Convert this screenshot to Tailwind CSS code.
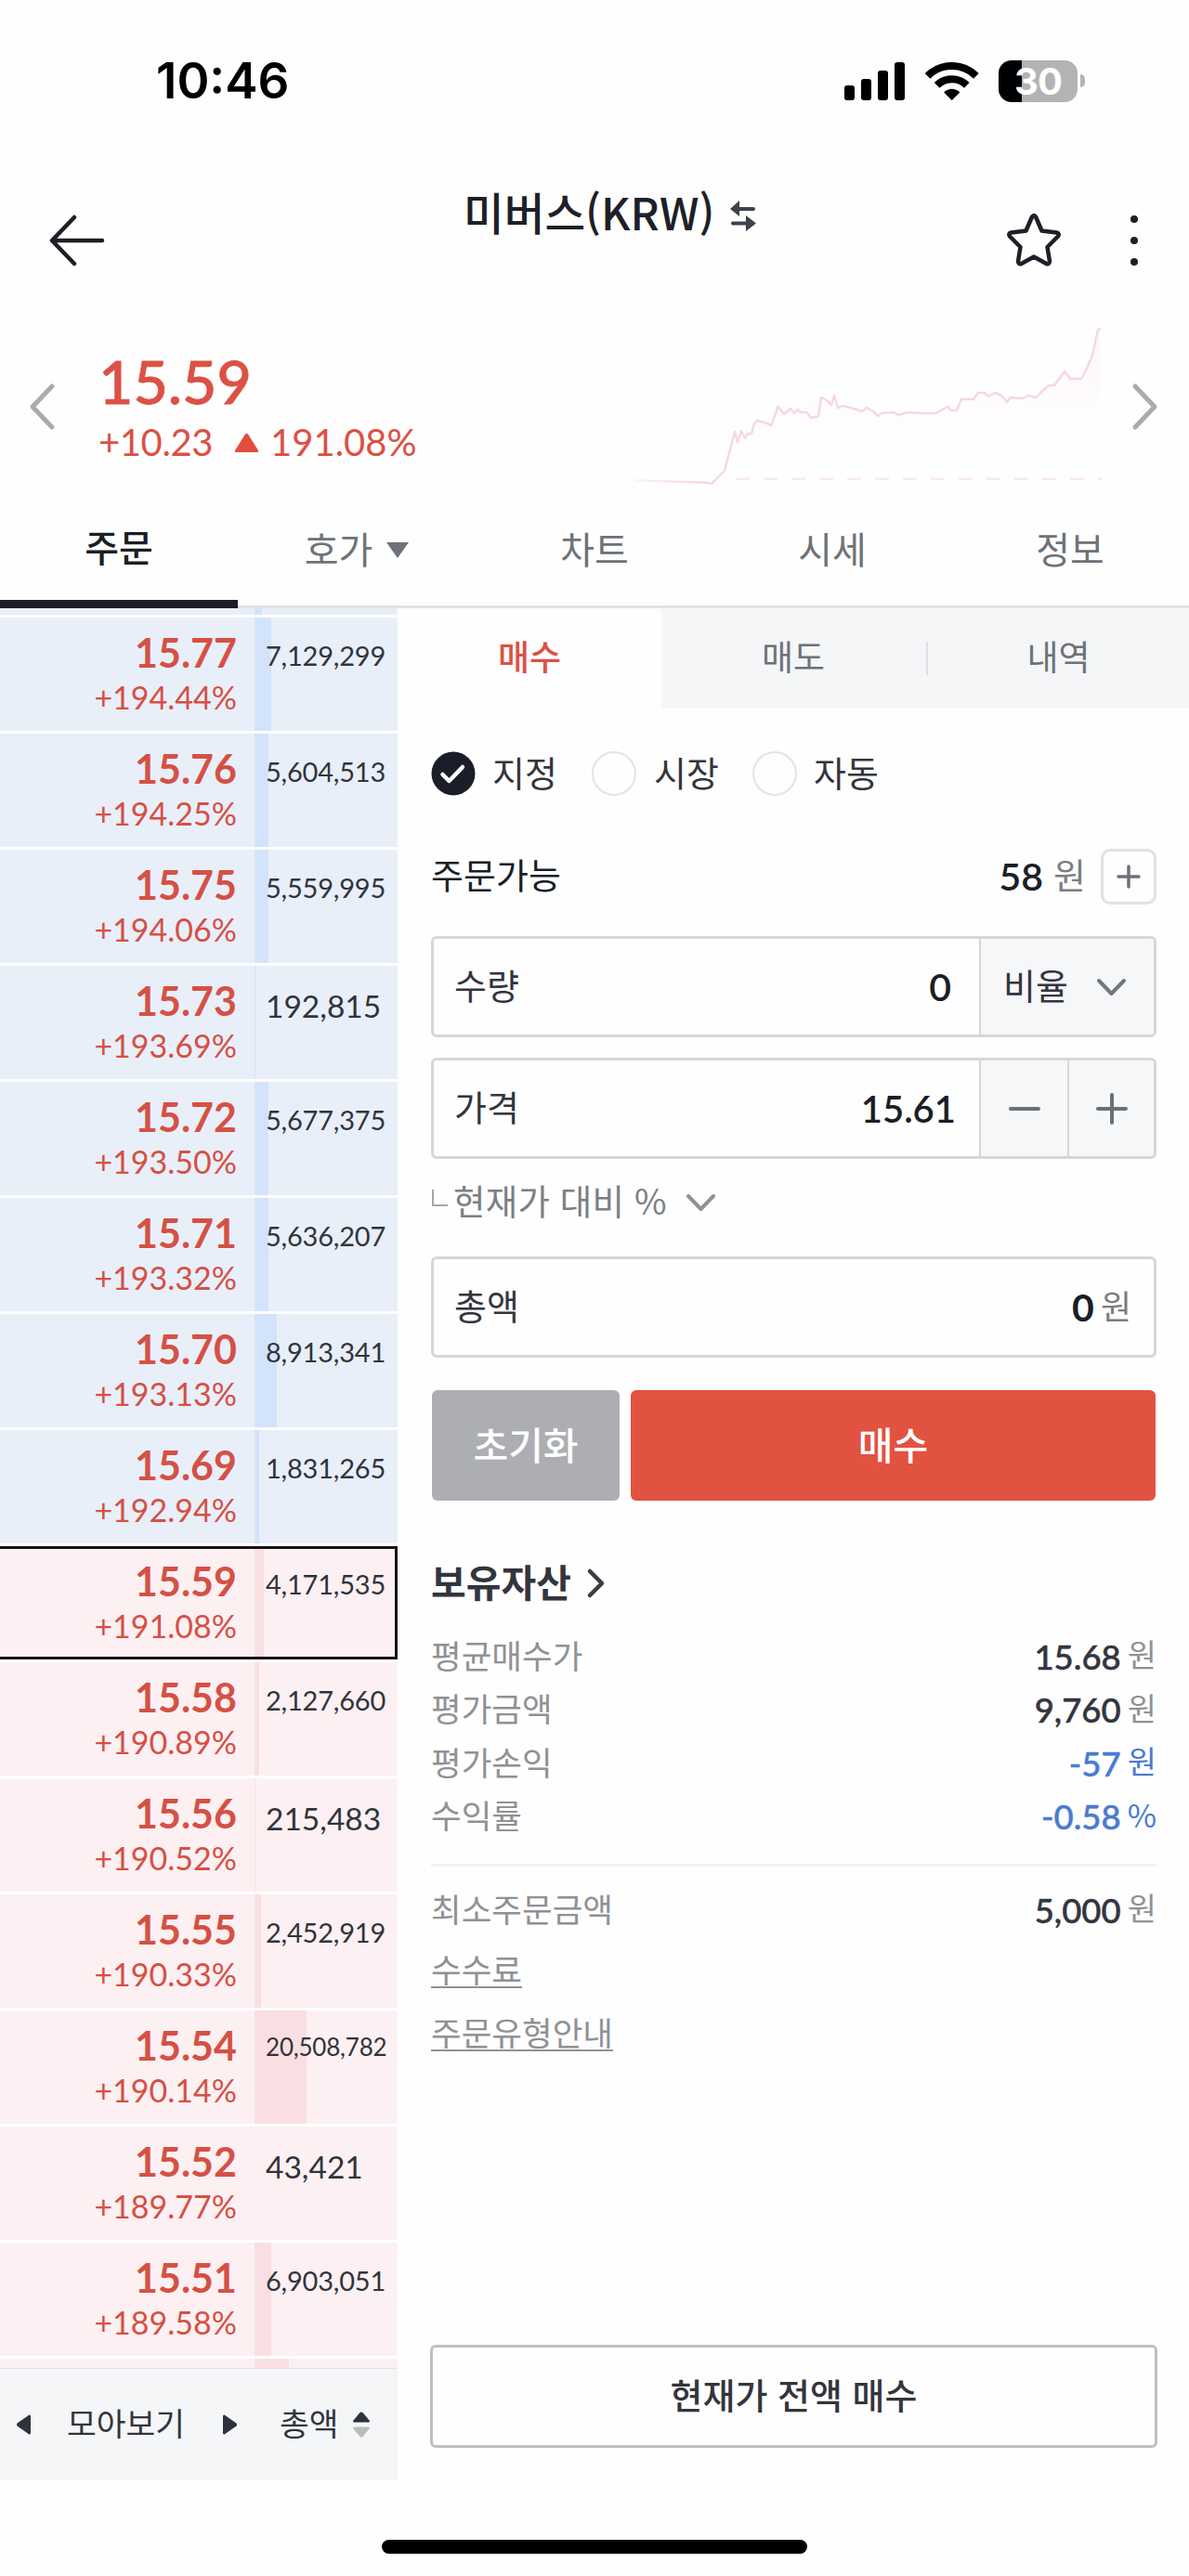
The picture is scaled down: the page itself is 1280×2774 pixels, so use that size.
<!DOCTYPE html>
<html lang="ko">
<head>
  <meta charset="UTF-8" />
  <meta name="viewport" content="width=device-width, initial-scale=1.0" />
  <title>미버스(KRW)</title>
  <script src="https://cdn.jsdelivr.net/npm/@tailwindcss/browser@4"></script>
</head>
<body class="bg-[#fefefe] w-[1280px] h-[2774px] overflow-hidden flex flex-col text-[#33353d] leading-none whitespace-nowrap font-['Noto_Sans_CJK_KR',sans-serif]">

  <!-- Status bar -->
  <div class="h-[174px] shrink-0 flex items-center pl-[168px] pr-[112px] text-black font-['Inter',sans-serif]">
    <span class="text-[53px] font-semibold">10:46</span>
    <svg class="ml-auto" width="65" height="41" viewBox="0 0 65 41">
      <rect x="0" y="25" width="11" height="16" rx="3" />
      <rect x="18" y="18" width="11" height="23" rx="3" />
      <rect x="36" y="9" width="11" height="32" rx="3" />
      <rect x="54" y="0" width="11" height="41" rx="3" />
    </svg>
    <svg class="ml-[22px]" width="58" height="41" viewBox="0 0 58 41" fill="none" stroke="black">
      <path d="M2.6 14.8a37 37 0 0 1 52.3 0" stroke-width="8" />
      <path d="M12.7 24.9a22.7 22.7 0 0 1 32.1 0" stroke-width="8" />
      <path d="M20.2 32.4a12.1 12.1 0 0 1 17.1 0L28.75 41z" fill="black" stroke="none" />
    </svg>
    <div class="ml-[21px] w-[85px] h-[45px] rounded-[14px] flex items-center justify-center bg-linear-to-r from-black from-30% to-[#b3b3b3] to-30%">
      <span class="text-[40px] leading-[45px] font-bold text-white tracking-[-1px]">30</span>
    </div>
    <div class="ml-[3px] w-[5px] h-[14px] rounded-r-full bg-[#b3b3b3]"></div>
  </div>

  <!-- Title bar -->
  <header class="h-[146px] shrink-0 flex items-start text-[#1d2027]">
    <svg class="ml-[52px] mt-[56px]" width="62" height="58" viewBox="0 0 62 58" fill="none" stroke="currentColor" stroke-width="4.5" stroke-linecap="round" stroke-linejoin="round">
      <path d="M28 4L4 29l24 25M4 29h54" />
    </svg>
    <h1 class="ml-[385px] mt-[28px] text-[47.5px] leading-[52px] font-medium">미버스(KRW)</h1>
    <svg class="ml-[17px] mt-[42px] text-[#3d424c]" width="28" height="33" viewBox="0 0 28 33" fill="currentColor">
      <path d="M0 9L10 0v7h15q2 0 2 2t-2 2H10v6z" />
      <path d="M28 24.5L17 33v-6.500H3q-2 0-2-2t2-2h14V16z" />
    </svg>
    <svg class="ml-auto mt-[54px]" width="62" height="60" viewBox="0 0 62 60" fill="none" stroke="currentColor" stroke-width="4.500" stroke-linejoin="round">
      <path d="M29 5.500Q31 2.500 33 5.500L39.500 20.500L55.500 22.500Q59 23.500 57 26.500L45.500 38L48 53.500Q47.500 57 44.500 56L31 48.500L17.500 56Q14.500 57 14 53.500L16.500 38L5 26.500Q3 23.500 6.500 22.500L22.500 20.500z" />
    </svg>
    <svg class="ml-[72px] mr-[54px] mt-[57px]" width="10" height="56" viewBox="0 0 10 56" fill="currentColor">
      <circle cx="5" cy="5" r="4" /><circle cx="5" cy="28" r="4" /><circle cx="5" cy="51" r="4" />
    </svg>
  </header>

  <!-- Price and mini chart -->
  <section class="h-[210px] shrink-0 flex items-start text-[#db5145] font-['Lato',sans-serif]">
    <svg class="ml-[30px] mt-[92px] text-[#aaabad]" width="30" height="52" viewBox="0 0 30 52" fill="none" stroke="currentColor" stroke-width="5" stroke-linecap="round" stroke-linejoin="round">
      <path d="M26 4L5 26l21 22" />
    </svg>
    <div class="ml-[46px] w-[562px] pt-[56px]">
      <div class="text-[64.5px] leading-[68px] font-medium [-webkit-text-stroke:0.8px_currentColor]">15.59</div>
      <div class="mt-[8px] flex items-center text-[40px] leading-[48px]">
        <span class="tracking-[-0.4px]">+10.23</span>
        <svg class="ml-[23px] mt-[2px]" width="27" height="22" viewBox="0 0 27 22" fill="#e24e3f"><path d="M12 1.500Q13.500 0 15 1.500L26 19Q26.500 21 25 21H2Q.5 21 1 19z" /></svg>
        <span class="ml-[12px]">191.08%</span>
      </div>
    </div>
    <svg class="ml-[12px] mt-[20px]" width="510" height="190" viewBox="680 340 510 190" fill="none">
      <defs>
        <linearGradient id="area" x1="0" y1="0" x2="0" y2="1">
          <stop offset="0" stop-color="#fdf5f7" />
          <stop offset="0.5" stop-color="#fefcfd" />
          <stop offset="1" stop-color="#fefefe" />
        </linearGradient>
        <linearGradient id="line" gradientUnits="userSpaceOnUse" x1="683" y1="0" x2="760" y2="0">
          <stop offset="0" stop-color="#fdf4f5" />
          <stop offset="1" stop-color="#f5d9dd" />
        </linearGradient>
      </defs>
      <path fill="url(#area)" d="M780 507L791 465L815 453L837 438L884 428L902 439L945 448L1007 445L1035 430L1053 423L1115 428L1146 400L1164 408L1176 382L1184 354V515H780z" />
      <path stroke="#f9e8eb" stroke-width="2.500" stroke-dasharray="15 15" d="M792 515.700H1186" />
      <path stroke="url(#line)" stroke-width="2.500" stroke-linejoin="round" d="M683 517L705 518L738 519L760 519.700L766 521L780 507L791 465L794 476L798 464L802 472L805 467L809 467L812 456L815.500 453L826 456L830.600 458L837.500 438L844 446L851 440L855 445L859 441L862 444L868.500 444L873 450L881 448L884 428L890 431L895 436L898 426L902 439L907 437L922 441L928 443L933 439L940 443L945 448L949 445L962 444L967 447L977 444L993 445L1007 445L1020 438L1024 442L1030 442L1035 430L1048 430L1053 423L1060 423L1064 427L1071 423L1078 426L1084 433L1088 428L1101 429L1107 426L1115.500 428L1122 421L1129 415L1135 415L1146 400L1152 408L1164 408L1170 397L1176 382L1182 355L1185 354" />
    </svg>
    <svg class="ml-[28px] mt-[92px] text-[#aaabad]" width="30" height="52" viewBox="0 0 30 52" fill="none" stroke="currentColor" stroke-width="5" stroke-linecap="round" stroke-linejoin="round">
      <path d="M4 4l21 22L4 48" />
    </svg>
  </section>

  <!-- Main tabs -->
  <nav class="h-[125px] shrink-0 grid grid-cols-5 text-[40px] text-[#6d7278] border-b-3 border-[#e1e2e4]">
    <div class="h-[125px] flex items-center justify-center border-b-9 border-[#1b1e26] text-[#1b1e26] font-medium">주문</div>
    <div class="flex items-center justify-center pb-[5px] gap-[15px]">호가
      <svg class="mt-[5px]" width="24" height="17" viewBox="0 0 24 17" fill="currentColor"><path d="M0 0h24L12 17z" /></svg>
    </div>
    <div class="flex items-center justify-center pb-[5px]">차트</div>
    <div class="flex items-center justify-center pb-[5px]">시세</div>
    <div class="flex items-center justify-center pb-[5px]">정보</div>
  </nav>

  <div class="h-[2016px] shrink-0 flex">

    <!-- Order book -->
    <aside class="w-[428px] flex flex-col">
      <div class="h-[7px] pl-[274px] bg-[#e9eff9]"><div class="w-[8px] h-full bg-[#d3e3fb]"></div></div>
      <div id="book" class="flex flex-col gap-[3px] py-[3px] font-['Lato',sans-serif]"></div>
      <div class="h-[10px] pl-[274px] bg-[#fdf0f2]"><div class="w-[37px] h-full bg-[#fadfe2]"></div></div>
      <div class="h-[121px] flex items-center pl-[18px] bg-[#f4f6f8] border-t border-[#e3dfe8] text-[34.500px]">
        <svg width="15" height="22" viewBox="0 0 15 22" fill="#2d323c"><path d="M15 1.500v19q-1 2-3 0L.5 12.500q-1-1.500 0-3L12 1.500q2-2 3 0z" /></svg>
        <span class="ml-[39px] pb-[5px]">모아보기</span>
        <svg class="ml-[41px]" width="15" height="22" viewBox="0 0 15 22" fill="#2d323c"><path d="M0 1.500v19q1 2 3 0l11.500-8q1-1.500 0-3L3 1.500q-2-2-3 0z" /></svg>
        <span class="ml-[46px] pb-[5px]">총액</span>
        <svg class="ml-[16px]" width="18" height="28" viewBox="0 0 18 28"><path d="M7.500 1Q9 0 10.500 1L18 10q0 1.500-1.500 1.500h-15Q0 11.500 0 10z" fill="#2d323c" /><path d="M7.500 27Q9 28 10.500 27L18 18q0-1.500-1.500-1.500h-15Q0 16.500 0 18z" fill="#babbbd" /></svg>
      </div>
    </aside>

    <!-- Order form -->
    <main class="w-[852px] flex flex-col">
      <div class="h-[107px] grid grid-cols-3 text-[37px] text-[#6d7278] bg-[#f4f6f8]">
        <div class="flex items-center justify-center pb-[5px] bg-[#fefefe] text-[#dc5145] font-medium">매수</div>
        <div class="flex items-center justify-center pb-[5px]">매도</div>
        <div class="flex items-center"><div class="w-[2px] h-[36px] ml-[1px] bg-[#dddfe2]"></div><span class="flex-1 text-center pb-[5px]">내역</span></div>
      </div>

      <div class="pl-[36px] pr-[35px] flex flex-col">
        <div class="mt-[47px] h-[48px] flex items-center text-[38px]">
          <svg width="48" height="48" viewBox="0 0 48 48" fill="none"><circle cx="24" cy="24" r="23.500" fill="#1b1e29" /><path d="M12.500 25l7 7L34 17" stroke="white" stroke-width="4.500" stroke-linecap="round" stroke-linejoin="round" /></svg>
          <span class="ml-[18px] w-[107px] pb-[5px]">지정</span>
          <div class="w-[48px] h-[48px] rounded-full border-2 border-[#e2e3e5]"></div>
          <span class="ml-[19px] w-[106px] pb-[5px]">시장</span>
          <div class="w-[48px] h-[48px] rounded-full border-2 border-[#e2e3e5]"></div>
          <span class="ml-[18px] pb-[5px]">자동</span>
        </div>

        <div class="mt-[57px] h-[59px] flex items-center text-[38px]">
          <span class="pb-[5px] text-[#1b1e26]">주문가능</span>
          <span class="ml-auto text-[41px] text-[#1b1e26] font-semibold font-['Lato',sans-serif]">58</span>
          <span class="ml-[11px] pb-[5px] text-[#7b7d82]">원</span>
          <div class="ml-[16px] w-[60px] h-[60px] rounded-[10px] border-3 border-[#e0e1e3] flex items-center justify-center">
            <svg width="26" height="26" viewBox="0 0 26 26" stroke="#6e7178" stroke-width="3.500" stroke-linecap="round"><path d="M13 2v22M2 13h22" /></svg>
          </div>
        </div>

        <div class="mt-[35px] h-[109px] flex rounded-[6px] border-3 border-[#d6d7d9] overflow-hidden text-[38px]">
          <div class="flex-1 flex items-center justify-between pl-[22px] pr-[30px]">
            <span class="pb-[5px]">수량</span>
            <span class="text-[41px] text-[#1b1e26] font-semibold font-['Lato',sans-serif]">0</span>
          </div>
          <div class="w-[188px] flex items-center pl-[24px] border-l-2 border-[#d6d7d9] bg-[#f6f7f9]">
            <span class="pb-[5px]">비율</span>
            <svg class="ml-[30px]" width="33" height="20" viewBox="0 0 33 20" fill="none" stroke="#73777d" stroke-width="4" stroke-linecap="round" stroke-linejoin="round"><path d="M3 3l13.500 14L30 3" /></svg>
          </div>
        </div>

        <div class="mt-[22px] h-[109px] flex rounded-[6px] border-3 border-[#d6d7d9] overflow-hidden text-[38px]">
          <div class="flex-1 flex items-center justify-between pl-[22px] pr-[25px]">
            <span class="pb-[5px]">가격</span>
            <span class="text-[40px] text-[#1b1e26] font-semibold font-['Lato',sans-serif]">15.61</span>
          </div>
          <div class="w-[95px] flex items-center justify-center border-l-2 border-[#d6d7d9] bg-[#f6f7f9]">
            <svg width="34" height="34" viewBox="0 0 34 34" stroke="#6b6f76" stroke-width="4" stroke-linecap="round"><path d="M2 17h30" /></svg>
          </div>
          <div class="w-[93px] flex items-center justify-center border-l-2 border-[#d6d7d9] bg-[#f6f7f9]">
            <svg width="34" height="34" viewBox="0 0 34 34" stroke="#6b6f76" stroke-width="4" stroke-linecap="round"><path d="M17 2v30M2 17h30" /></svg>
          </div>
        </div>

        <div class="mt-[22px] h-[49px] flex items-center text-[37.500px] text-[#7b7f84]">
          <div class="ml-[1px] mb-[9px] w-[17px] h-[18px] border-l-2 border-b-2 border-[#a5a7aa]"></div>
          <span class="ml-[6px] pb-[5px] tracking-[0.2px]">현재가 대비 %</span>
          <svg class="ml-[20px]" width="33" height="20" viewBox="0 0 33 20" fill="none" stroke="#8e9195" stroke-width="4" stroke-linecap="round" stroke-linejoin="round"><path d="M3 3l13.500 14L30 3" /></svg>
        </div>

        <div class="mt-[34px] h-[109px] flex items-center pl-[22px] pr-[24px] rounded-[6px] border-3 border-[#d6d7d9] text-[38px]">
          <span class="pb-[5px]">총액</span>
          <span class="ml-auto text-[41px] text-[#1b1e26] font-bold font-['Lato',sans-serif]">0</span>
          <span class="ml-[7px] pb-[5px] text-[36px] text-[#7b7d82]">원</span>
        </div>

        <div class="mt-[35px] h-[119px] flex gap-[12px] pl-[1px] pr-[1px] text-[41px] text-white font-medium">
          <div class="w-[202px] flex items-center justify-center pb-[5px] rounded-[6px] bg-[#adaeb4]">초기화</div>
          <div class="flex-1 flex items-center justify-center pb-[5px] rounded-[6px] bg-[#e25241]">매수</div>
        </div>

        <div class="mt-[64px] h-[50px] flex items-center text-[41px] font-bold">
          <span class="pb-[5px]">보유자산</span>
          <svg class="ml-[16px]" width="22" height="34" viewBox="0 0 22 34" fill="none" stroke="#3b3d46" stroke-width="4.500" stroke-linecap="round" stroke-linejoin="round"><path d="M4 4l13 13L4 30" /></svg>
        </div>

        <div id="assets" class="mt-[25px] text-[35.500px] text-[#909195]"></div>

        <div class="mt-[22px] h-[3px] bg-[#f1f2f3]"></div>

        <div id="limits" class="mt-[18px] text-[35.500px] text-[#909195]"></div>
        <div class="mt-[16px] text-[35.500px] text-[#909195] flex flex-col items-start gap-[29px]">
          <a class="h-[39px] border-b-2 border-[#909195]">수수료</a>
          <a class="h-[39px] border-b-2 border-[#909195]">주문유형안내</a>
        </div>

      </div>

      <div class="mt-auto mb-[35px] ml-[35px] mr-[34px] h-[111px] flex items-center justify-center pb-[5px] rounded-[6px] border-3 border-[#bfbfc1] text-[38px] font-medium">현재가 전액 매수</div>
    </main>
  </div>

  <!-- Home indicator -->
  <div class="mt-[64px] mx-auto w-[458px] h-[15px] shrink-0 rounded-full bg-black"></div>

  <script>
    // price, change, volume, depth bar width in px
    const asks = [
      ['15.77', '+194.44%', '7,129,299', 18],
      ['15.76', '+194.25%', '5,604,513', 15],
      ['15.75', '+194.06%', '5,559,995', 15],
      ['15.73', '+193.69%', '192,815', 1],
      ['15.72', '+193.50%', '5,677,375', 15],
      ['15.71', '+193.32%', '5,636,207', 15],
      ['15.70', '+193.13%', '8,913,341', 24],
      ['15.69', '+192.94%', '1,831,265', 5],
    ];
    const bids = [
      ['15.59', '+191.08%', '4,171,535', 10],
      ['15.58', '+190.89%', '2,127,660', 5],
      ['15.56', '+190.52%', '215,483', 1],
      ['15.55', '+190.33%', '2,452,919', 7],
      ['15.54', '+190.14%', '20,508,782', 56],
      ['15.52', '+189.77%', '43,421', 0],
      ['15.51', '+189.58%', '6,903,051', 18],
    ];

    // long volumes shrink to fit the column
    function volumeSize(volume) {
      if (volume.length > 9) return 'text-[26px] leading-[78px] tracking-[-0.2px]';
      if (volume.length > 7) return 'text-[29px] leading-[82px] tracking-[-0.2px]';
      return 'text-[33.5px] leading-[86px]';
    }

    function renderRow([price, change, volume, bar], rowColor, barColor, current) {
      return `
        <div class="relative h-[122px] flex ${rowColor}">
          <div class="w-[274px] pr-[19px] pt-[15px] text-right text-[#d55045]">
            <div class="text-[43px] leading-[46px] font-bold">${price}</div>
            <div class="text-[34px] leading-[49px]">${change}</div>
          </div>
          <div class="relative flex-1 pl-[12px] text-[#30343c]">
            <div class="absolute left-0 top-0 h-full ${barColor}" style="width:${bar}px"></div>
            <div class="relative ${volumeSize(volume)}">${volume}</div>
          </div>
          ${current ? '<div class="absolute inset-0 border-3 border-l-0 border-[#121316]"></div>' : ''}
        </div>`;
    }

    document.getElementById('book').innerHTML =
      asks.map(row => renderRow(row, 'bg-[#e9eff9]', 'bg-[#d3e3fb]', false)).join('') +
      bids.map((row, i) => renderRow(row, 'bg-[#fdf0f2]', 'bg-[#fadfe2]', i === 0)).join('');

    function renderInfo([label, value, unit, valueColor, unitColor]) {
      return `
        <div class="h-[57.5px] flex items-center">
          <span class="pb-[5px]">${label}</span>
          <span class="ml-auto text-[36.5px] font-medium [-webkit-text-stroke:0.5px_currentColor] font-['Lato',sans-serif] ${valueColor}">${value}</span>
          <span class="ml-[7px] pb-[5px] text-[34px] ${unitColor}">${unit}</span>
        </div>`;
    }

    document.getElementById('assets').innerHTML = [
      ['평균매수가', '15.68', '원', 'text-[#33353d]', 'text-[#909195]'],
      ['평가금액', '9,760', '원', 'text-[#33353d]', 'text-[#909195]'],
      ['평가손익', '-57', '원', 'text-[#4a7bd0]', 'text-[#4a7bd0]'],
      ['수익률', '-0.58', '%', 'text-[#4a7bd0]', 'text-[#4a7bd0]'],
    ].map(renderInfo).join('');

    document.getElementById('limits').innerHTML =
      renderInfo(['최소주문금액', '5,000', '원', 'text-[#33353d]', 'text-[#909195]']);
  </script>
</body>
</html>
